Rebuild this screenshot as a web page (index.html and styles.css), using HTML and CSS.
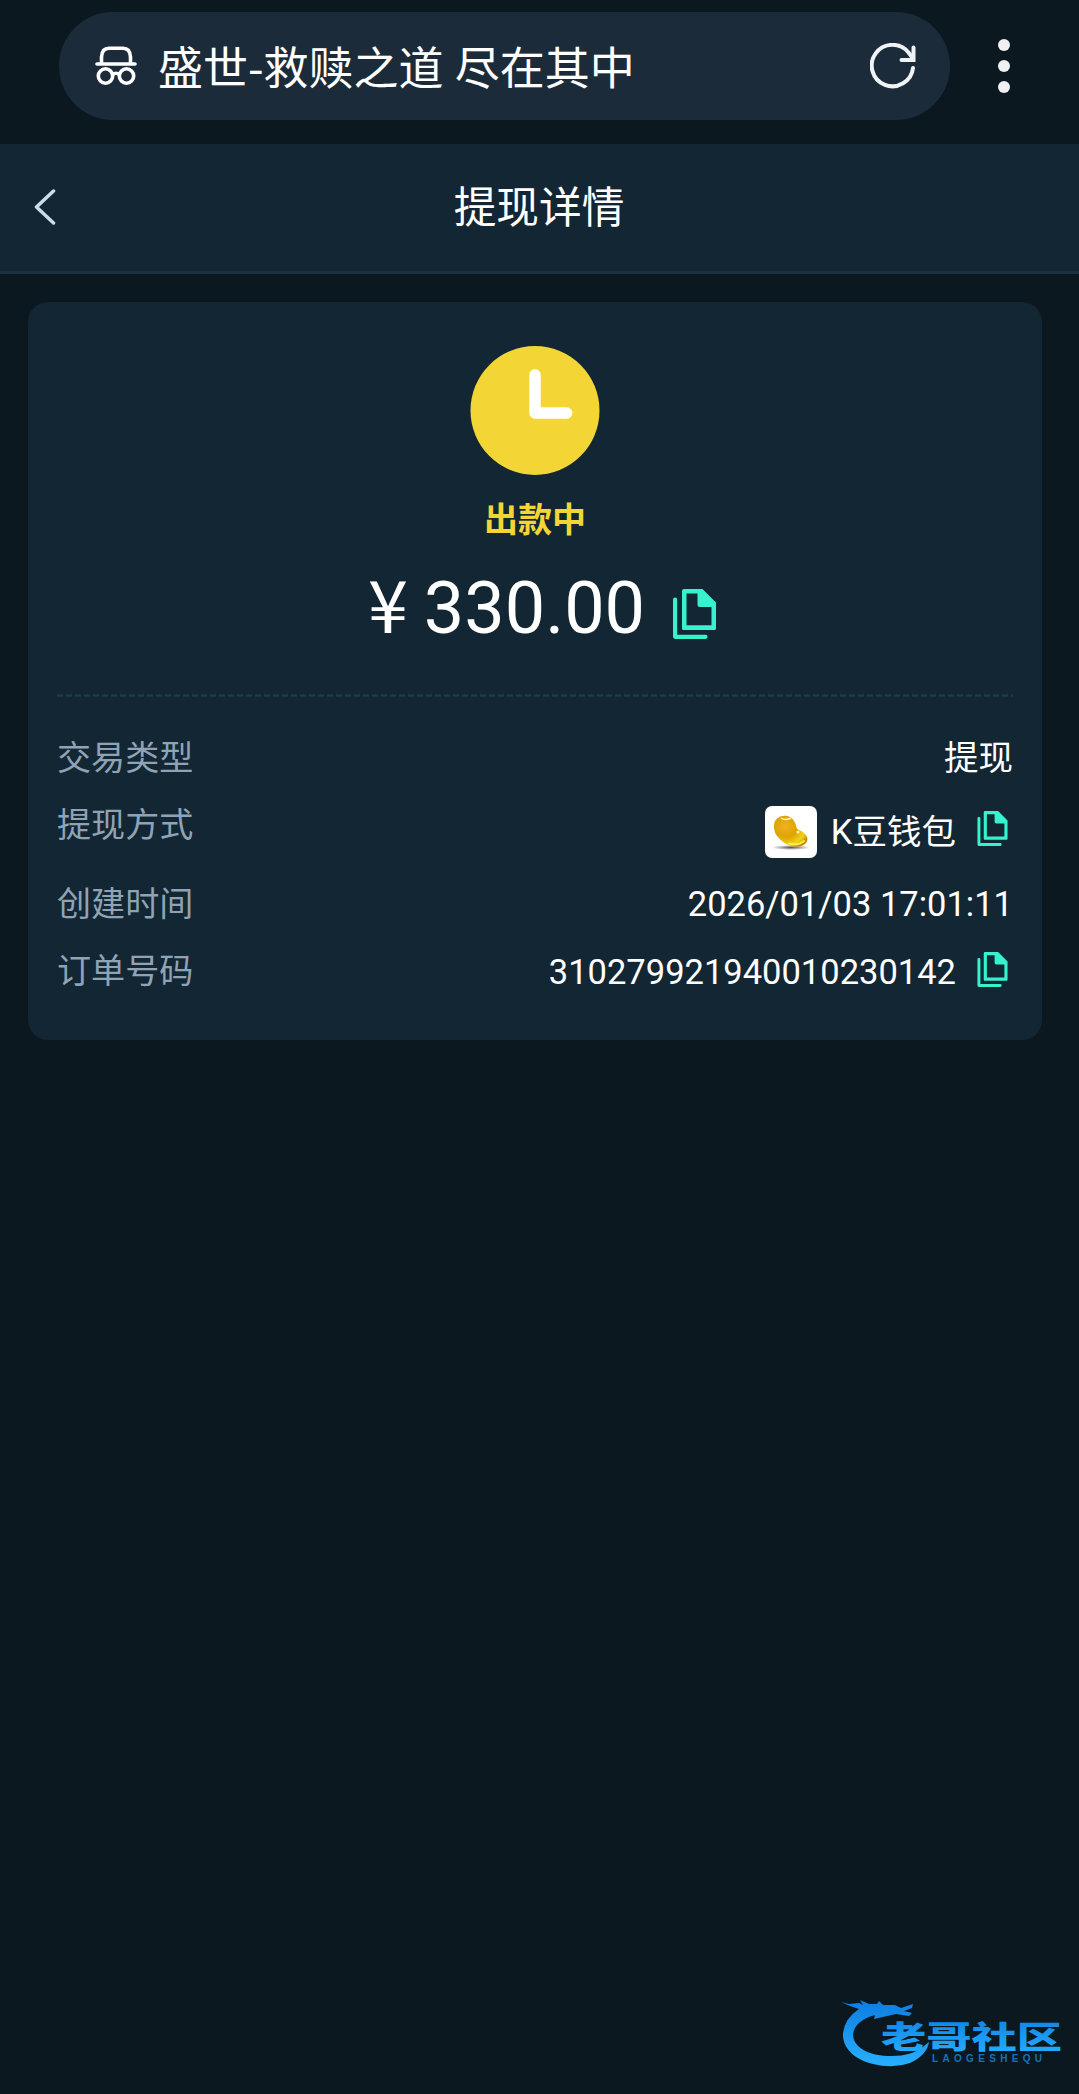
FILE: index.html
```html
<!DOCTYPE html>
<html lang="zh-CN">
<head>
	<meta charset="UTF-8">
	<meta name="viewport" content="width=device-width, initial-scale=1.0">
	<title>提现详情</title>
	<link rel="stylesheet" href="styles.css">
</head>
<body>
	<svg class="sprite" aria-hidden="true">
		<symbol id="icon-copy" viewBox="0 0 43 50">
			<path d="M2.1 10.500V47.800H32.500" fill="none" stroke="currentColor" stroke-width="4.2" stroke-linecap="round" stroke-linejoin="round"/>
			<path fill-rule="evenodd" d="M11 0H29.500L43 13.500V39.500Q43 41 41.500 41H10.500Q9 41 9 39.500V2Q9 0 11 0ZM13.500 4.500V36.300H38.500V18H27Q24.500 18 24.500 15.500V4.500Z" fill="currentColor"/>
		</symbol>
	</svg>

	<div class="browser-bar">
		<div class="address">
			<svg class="icon-incognito" viewBox="0 0 42 40" fill="none" stroke="currentColor" stroke-width="3.600" stroke-linecap="round">
				<path d="M2 18H40"/>
				<path d="M6.500 17V11Q7 2.200 14 2.200H28Q35 2.200 35.500 11V17"/>
				<circle cx="10.500" cy="30" r="7.200"/>
				<circle cx="31.500" cy="30" r="7.200"/>
				<path d="M17.500 28.500Q21 26 24.500 28.500"/>
			</svg>
			<span class="address-title">盛世-救赎之道 尽在其中</span>
			<svg class="icon-reload" viewBox="0 0 46 46" fill="none" stroke="currentColor" stroke-width="4" stroke-linecap="round" stroke-linejoin="round">
				<path d="M43 25A20.700 20.700 0 1 1 38.500 9.500L43 15.500"/>
				<path d="M43.500 4.500V17H31.500" stroke-linejoin="miter"/>
			</svg>
		</div>
		<div class="menu-dots">
			<span></span>
			<span></span>
			<span></span>
		</div>
	</div>

	<header class="header">
		<svg class="icon-back" viewBox="0 0 22 36" fill="none" stroke="currentColor" stroke-width="3.500" stroke-linecap="round" stroke-linejoin="round">
			<path d="M19.500 2L2.500 18L19.500 34"/>
		</svg>
		<h1>提现详情</h1>
	</header>

	<main class="card">
		<section class="summary">
			<svg class="icon-clock" viewBox="0 0 130 130">
				<circle cx="65" cy="65" r="65" fill="#f3d636"/>
				<path d="M65 29V67.500H97" fill="none" stroke="#fff" stroke-width="11.500" stroke-linecap="round" stroke-linejoin="round"/>
			</svg>
			<p class="status">出款中</p>
			<div class="amount">
				<span><span class="currency">¥</span> 330.00</span>
				<svg class="icon-copy"><use href="#icon-copy"/></svg>
			</div>
		</section>
		<svg class="divider" height="3"><line x1="0" y1="1.500" x2="956" y2="1.500"/></svg>
		<dl class="details">
			<div class="row">
				<dt>交易类型</dt>
				<dd>提现</dd>
			</div>
			<div class="row row-wallet">
				<dt>提现方式</dt>
				<dd>
					<svg class="wallet-logo" viewBox="0 0 52 52">
						<defs>
							<radialGradient id="bean" cx=".35" cy=".35" r=".75">
								<stop offset="0" stop-color="#f0b323"/>
								<stop offset=".45" stop-color="#dda400"/>
								<stop offset=".8" stop-color="#f3d21c"/>
								<stop offset="1" stop-color="#c58a00"/>
							</radialGradient>
							<radialGradient id="shadow">
								<stop offset="0" stop-color="#555"/>
								<stop offset="1" stop-color="#fff"/>
							</radialGradient>
						</defs>
						<rect width="52" height="52" rx="7" fill="#fff"/>
						<ellipse cx="26" cy="41.500" rx="19" ry="2.500" fill="url(#shadow)"/>
						<path d="M9 20C9 8 25 7 29 15C32 19 30 22 34 24C42 27 45 34 40 38C34 43 22 40 17 35C12 31 9 27 9 20Z" fill="url(#bean)"/>
						<path d="M16 12Q20 15 26 12" fill="none" stroke="#fff6bd" stroke-width="1.500"/>
						<path d="M24 37.500Q33 40 39 35" fill="none" stroke="#ffed46" stroke-width="2" stroke-linecap="round"/>
						<circle cx="33" cy="26" r="1.500" fill="#fff6bd"/>
					</svg>
					<span>K豆钱包</span>
					<svg class="icon-copy"><use href="#icon-copy"/></svg>
				</dd>
			</div>
			<div class="row">
				<dt>创建时间</dt>
				<dd>2026/01/03 17:01:11</dd>
			</div>
			<div class="row row-order">
				<dt>订单号码</dt>
				<dd>
					<span>310279921940010230142</span>
					<svg class="icon-copy"><use href="#icon-copy"/></svg>
				</dd>
			</div>
		</dl>
	</main>

	<svg class="watermark" viewBox="0 0 224 76">
		<defs>
			<linearGradient id="blue" x1="0" y1="0" x2="0" y2="1">
				<stop offset="0" stop-color="#0d7de0"/>
				<stop offset="1" stop-color="#27b0ff"/>
			</linearGradient>
		</defs>
		<!-- dragon body and head -->
		<path fill="url(#blue)" d="M0 3L8 5L18 4L22 6L19 1L28 5L36 5L38 2L42 6L54 6L60 9L72 5L71 9L63 12L71 14L68 17L55 15L46 17L33 20L34 16Q13 22 12 36C13 50 30 57 50 57Q72 57 83 47L88 43Q86 56 69 64Q52 70 32 65C12 60 1 48 2 34Q4 19 18 10L9 7Z"/>
		<text class="watermark-name" x="40" y="49" textLength="181" lengthAdjust="spacingAndGlyphs">老哥社区</text>
		<text class="watermark-latin" x="91" y="63" textLength="110">LAOGESHEQU</text>
	</svg>
</body>
</html>
```

FILE: styles.css
```css
* {
	box-sizing: border-box;
}

body {
	position: relative;
	min-height: 2094px;
	margin: 0;
	background-color: #0b1820;
	color: #fff;
	font-family: Roboto, "Noto Sans CJK SC", sans-serif;
}

svg {
	display: block;
	flex-shrink: 0;
}

.sprite {
	position: absolute;
	width: 0;
	height: 0;
}

/* Browser bar */
.browser-bar {
	display: flex;
	height: 144px;
	padding: 12px 69px 24px 59px;
	align-items: center;
	justify-content: space-between;
}

.address {
	display: flex;
	width: 891px;
	height: 108px;
	padding: 0 34px 0 36px;
	align-items: center;
	border-radius: 54px;
	background-color: #1c2b3a;
}

.icon-incognito {
	width: 42px;
	height: 40px;
}

.address-title {
	flex: 1;
	margin-left: 21px;
	font-family: "Noto Sans CJK SC", sans-serif;
	font-size: 45px;
	line-height: 60px;
	word-spacing: 1px;
	white-space: nowrap;
}

.icon-reload {
	width: 46px;
	height: 46px;
	color: #f0f3f6;
}

.menu-dots {
	display: flex;
	width: 12px;
	flex-direction: column;
	gap: 9px;
}

.menu-dots span {
	width: 12px;
	height: 12px;
	border-radius: 50%;
	background-color: #f0f0f2;
}

/* Header */
.header {
	display: grid;
	height: 130px;
	padding: 0 35px 0 34px;
	grid-template-columns: 22px 1fr 22px;
	align-items: center;
	border-bottom: 3px solid #1c3040;
	background-color: #132633;
}

.icon-back {
	width: 22px;
	height: 36px;
	margin-bottom: 2px;
	color: #cbdcec;
}

.header h1 {
	margin: 0 0 7px;
	font-size: 42.700px;
	font-weight: 400;
	text-align: center;
}

/* Card */
.card {
	width: 1014px;
	height: 738px;
	margin: 28px 0 0 28px;
	padding: 44px 29px 0;
	border-radius: 20px;
	background-color: #132633;
}

.summary {
	display: flex;
	height: 348px;
	flex-direction: column;
	align-items: center;
}

.icon-clock {
	width: 130px;
	height: 129px;
}

.status {
	margin: 20px 0 0;
	color: #f3d636;
	font-size: 34px;
	font-weight: 700;
	line-height: 50px;
}

.amount {
	display: flex;
	margin: 21px 0 0 14px;
	align-items: center;
	gap: 28px;
	font-size: 72px;
	line-height: 84px;
}

.currency {
	margin-right: -2px;
	font-family: "Noto Sans CJK SC", sans-serif;
	line-height: 1;
}

.icon-copy {
	width: 31px;
	height: 35px;
	color: #36f2cf;
}

.amount .icon-copy {
	width: 43px;
	height: 50px;
	margin-top: 10px;
}

.divider {
	width: 956px;
	stroke: #1b3d48;
	stroke-width: 2.500;
	stroke-dasharray: 6 3;
}

/* Details */
.details {
	display: flex;
	margin: 36px 0 0;
	flex-direction: column;
	gap: 16.500px;
	font-size: 34.500px;
	line-height: 50px;
}

.row {
	display: flex;
	height: 50px;
	justify-content: space-between;
}

.row-wallet {
	height: 63px;
}

.row dt {
	color: #8fa3b5;
	font-size: 34.100px;
}

.row dd {
	display: flex;
	margin: 0;
	align-items: center;
}

.row .icon-copy {
	margin: 0 5px 0 21px;
}

.row-wallet dd {
	padding-top: 2px;
}

.row-wallet .icon-copy {
	margin-bottom: 7px;
}

.row-order dd {
	padding-top: 3px;
}

.row-order .icon-copy {
	margin-bottom: 6px;
}

.wallet-logo {
	width: 52px;
	height: 52px;
	margin-right: 14px;
}

/* Community watermark */
.watermark {
	position: absolute;
	right: 14px;
	bottom: 19px;
	width: 224px;
	height: 76px;
	overflow: visible;
}

.watermark-name {
	fill: url(#blue);
	font-family: "Noto Sans CJK SC", sans-serif;
	font-size: 31px;
	font-weight: 900;
}

.watermark-latin {
	fill: #1673b8;
	font-family: "Liberation Sans", sans-serif;
	font-size: 10px;
	font-weight: 700;
}
```
